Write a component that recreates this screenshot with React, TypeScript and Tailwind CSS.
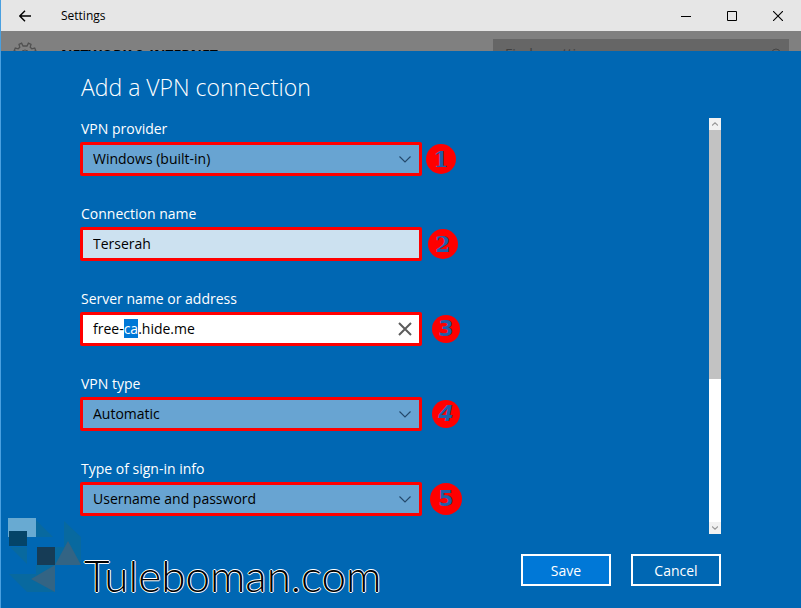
import { useEffect, useRef } from "react";
import type { ReactNode } from "react";

const boxClass =
  "flex h-[34px] w-[342px] items-center rounded-xs border-3 border-[#ff0000] text-sm text-black";

function Chevron() {
  return (
    <svg viewBox="0 0 12 7" className="pointer-events-none -ml-5 h-[7px] w-3 shrink-0" aria-hidden="true">
      <path d="M0.5 0.5 L6 6 L11.5 0.5" fill="none" stroke="#24486a" strokeWidth="1.1" />
    </svg>
  );
}

function Field({ id, label, badge, children }: { id: string; label: string; badge: ReactNode; children: ReactNode }) {
  return (
    <div className="flex flex-col">
      <label htmlFor={id} className="h-6 pl-px text-sm leading-[22px]">
        {label}
      </label>
      <div className="flex h-[34px] items-center">
        {children}
        {badge}
      </div>
    </div>
  );
}

function SelectBox({ id, value }: { id: string; value: string }) {
  return (
    <div className={boxClass + " bg-[#68a4d2]"}>
      <select id={id} defaultValue={value} className="h-full w-full appearance-none bg-transparent px-[10px] outline-none">
        <option>{value}</option>
      </select>
      <Chevron />
    </div>
  );
}

const badgeClass =
  "flex shrink-0 items-center justify-center rounded-full bg-[#ff0000] text-[22px] leading-none font-bold text-[#1f5fa8]";

function Logo() {
  return (
    <svg viewBox="0 0 74 75" className="h-[75px] w-[74px] shrink-0" aria-hidden="true">
      <g fill="#08699f">
        <path d="M28 2 L45 19 H28 Z" />
        <path d="M56 3 L73 19 V47 H47 V29 H56 Z" />
        <path d="M2 29 H19 V46 Z" />
        <path d="M1 56 H28 V47 H47 V74 H19 Z" />
      </g>
      <path d="M0 0 H28 V19 H0 Z" fill="#68aad2" />
      <path d="M1 13 H19 V28 H1 Z" fill="#044468" />
      <path d="M29 29 H47 V47 H29 Z" fill="#163c56" />
      <path d="M60 23 L73 47 H47 Z" fill="#336484" />
      <path d="M47 47 V74 L23 61 Z" fill="#336484" />
    </svg>
  );
}

export default function App() {
  const server = useRef<HTMLInputElement>(null);

  useEffect(() => {
    server.current?.focus();
    server.current?.setSelectionRange(5, 7);
  }, []);

  return (
    <div className="flex min-h-screen flex-col border-l border-[#4aa0e0] bg-[#0067b3] font-['Open_Sans','Noto_Sans',sans-serif] text-white">
      <header className="flex h-[31px] items-center bg-[#e6e6e6] text-black">
        <button type="button" aria-label="Back" className="flex h-[30px] w-12 items-center justify-center">
          <svg viewBox="0 0 12 12" className="size-3" aria-hidden="true">
            <path d="M12 6 H1 M6 0.7 L0.8 6 L6 11.3" fill="none" stroke="#000" strokeWidth="1.4" />
          </svg>
        </button>
        <span className="flex-1 pl-3 text-xs leading-[30px]">Settings</span>
        <button type="button" aria-label="Minimize" className="flex h-full w-[46px] items-center justify-center">
          <svg viewBox="0 0 10 10" className="size-[10px]" shapeRendering="crispEdges" aria-hidden="true">
            <path d="M0 5 H10 V6 H0 Z" />
          </svg>
        </button>
        <button type="button" aria-label="Maximize" className="flex h-[30px] w-[46px] items-center justify-center">
          <svg viewBox="0 0 10 10" className="size-[10px]" aria-hidden="true">
            <path d="M0.5 0.5 H9.5 V9.5 H0.5 Z" fill="none" stroke="#000" />
          </svg>
        </button>
        <button type="button" aria-label="Close" className="flex h-[30px] w-[46px] items-center justify-center">
          <svg viewBox="0 0 10 10" className="size-[10px]" aria-hidden="true">
            <path d="M0 0 L10 10 M10 0 L0 10" fill="none" stroke="#000" strokeWidth="1.1" />
          </svg>
        </button>
      </header>

      <div className="h-5 overflow-hidden bg-[#808080]">
        <div className="flex items-center px-3 pt-2">
          <svg viewBox="0 0 24 24" className="size-6 shrink-0" aria-hidden="true">
            <path
              d="M10 4 L8.6 1.2 L6 2.3 L6.8 5.2 L5.2 6.8 L2.3 6 L1.2 8.6 L4 10 V14 L1.2 15.4 L2.3 18 L5.2 17.2 L6.8 18.8 L6 21.7 L8.6 22.8 L10 20 H14 L15.4 22.8 L18 21.7 L17.2 18.8 L18.8 17.2 L21.7 18 L22.8 15.4 L20 14 V10 L22.8 8.6 L21.7 6 L18.8 6.8 L17.2 5.2 L18 2.3 L15.4 1.2 L14 4 Z"
              fill="none"
              stroke="#505050"
              strokeWidth="1.3"
            />
            <circle cx="12" cy="12" r="4" fill="none" stroke="#505050" />
          </svg>
          <h2 className="flex-1 pt-0.5 pl-6 text-sm font-bold text-black">NETWORK &amp; INTERNET</h2>
          <div className="flex h-[30px] w-[296px] items-center bg-[#666666] pr-2">
            <input
              aria-label="Find a setting"
              placeholder="Find a setting"
              className="h-7 min-w-0 flex-1 bg-transparent pb-0.5 pl-3 text-sm outline-none placeholder:text-[#404040]"
            />
            <svg viewBox="0 0 12 12" className="size-3" aria-hidden="true">
              <path d="M0 12 L4 8" stroke="#444" />
              <circle cx="7" cy="5" r="4" fill="none" stroke="#444" />
            </svg>
          </div>
        </div>
      </div>

      <main className="flex flex-1 flex-col pr-20 pl-[79px]">
        <h1 className="h-[67px] pt-5 pl-px text-[23px] leading-8 font-light">Add a VPN connection</h1>
        <div className="flex h-[416px] justify-between">
          <div className="flex flex-col gap-[27px]">
            <Field id="provider" label="VPN provider" badge={<span className={badgeClass + " ml-1 size-[30px] font-['DejaVu_Serif',serif]"}>1</span>}>
              <SelectBox id="provider" value="Windows (built-in)" />
            </Field>
            <Field id="name" label="Connection name" badge={<span className={badgeClass + " ml-1.5 size-[30px] font-['DejaVu_Serif',serif]"}>2</span>}>
              <div className={boxClass + " bg-[#cce1f0]"}>
                <input id="name" defaultValue="Terserah" className="h-full w-full bg-transparent px-[10px] pb-0.5 outline-none" />
              </div>
            </Field>
            <Field id="server" label="Server name or address" badge={<span className={badgeClass + " ml-2.5 size-7 font-['DejaVu_Sans',sans-serif]"}>3</span>}>
              <div className={boxClass + " bg-white"}>
                <input
                  id="server"
                  ref={server}
                  defaultValue="free-ca.hide.me"
                  className="h-full min-w-0 flex-1 bg-transparent px-[10px] pb-0.5 outline-none selection:bg-[#0078d7] selection:text-white"
                />
                <button type="button" aria-label="Clear" className="flex h-full w-7 items-center justify-center">
                  <svg viewBox="0 0 14 14" className="size-[14px]" aria-hidden="true">
                    <path d="M1 1 L13 13 M13 1 L1 13" fill="none" stroke="#5c5c5c" strokeWidth="2" />
                  </svg>
                </button>
              </div>
            </Field>
            <Field id="type" label="VPN type" badge={<span className={badgeClass + " ml-2.5 size-7 font-['DejaVu_Sans',sans-serif] italic"}>4</span>}>
              <SelectBox id="type" value="Automatic" />
            </Field>
            <Field id="signin" label="Type of sign-in info" badge={<span className={badgeClass + " ml-2 size-8 font-['DejaVu_Sans',sans-serif]"}>5</span>}>
              <SelectBox id="signin" value="Username and password" />
            </Field>
          </div>
          <div className="flex w-3 flex-col bg-white">
            <button type="button" aria-label="Scroll up" className="flex h-3 items-center justify-center bg-[#f1f1f1]">
              <svg viewBox="0 0 6 4" className="h-1 w-1.5" aria-hidden="true">
                <path d="M0 3.5 L3 0.8 L6 3.5" fill="none" stroke="#999" strokeWidth="1.2" />
              </svg>
            </button>
            <div className="h-[249px] bg-[#c2c2c2]" />
            <div className="flex-1 bg-white" />
            <button type="button" aria-label="Scroll down" className="flex h-3 items-center justify-center bg-[#f1f1f1]">
              <svg viewBox="0 0 6 4" className="h-1 w-1.5" aria-hidden="true">
                <path d="M0 0.5 L3 3.2 L6 0.5" fill="none" stroke="#999" strokeWidth="1.2" />
              </svg>
            </button>
          </div>
        </div>
        <div className="flex justify-end gap-5 pt-5 pb-[22px]">
          <button type="button" className="h-8 w-[90px] border-2 border-white bg-[#0078d7] pt-px text-sm">
            Save
          </button>
          <button type="button" className="h-8 w-[90px] border-2 border-white pt-px text-sm">
            Cancel
          </button>
        </div>
      </main>

      <div className="pointer-events-none absolute bottom-[15px] left-2 flex items-end">
        <Logo />
        <span className="pl-0.5 font-[Lato,sans-serif] text-[44px] leading-9 font-light text-black [text-shadow:-1px_0_0_#fff,1px_0_0_#fff,0_-1px_0_#fff,0_1px_0_#fff]">
          Tuleboman.com
        </span>
      </div>
    </div>
  );
}
